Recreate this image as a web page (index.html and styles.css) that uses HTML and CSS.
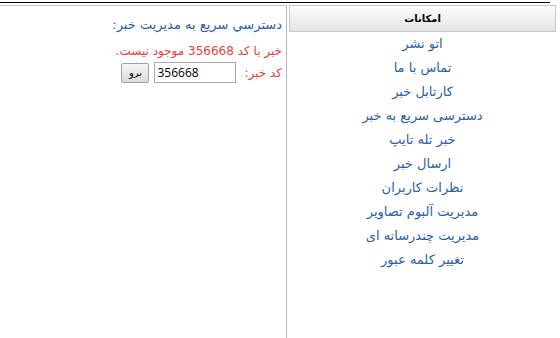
FILE: index.html
```html
<!DOCTYPE html>
<html dir="rtl">
<head>
  <meta charset="utf-8">
  <title>مديريت خبر</title>
  <link rel="stylesheet" href="styles.css">
</head>
<body>

  <div class="top-line"></div>

  <div class="page">
    <!-- menu on the right -->
    <div class="sidebar">
      <div class="sidebar-title">امکانات</div>
      <ul class="menu">
        <li><a href="#">اتو نشر</a></li>
        <li><a href="#">تماس با ما</a></li>
        <li><a href="#">کارتابل خبر</a></li>
        <li><a href="#">دسترسی سریع به خبر</a></li>
        <li><a href="#">خبر تله تایپ</a></li>
        <li><a href="#">ارسال خبر</a></li>
        <li><a href="#">نظرات کاربران</a></li>
        <li><a href="#">مدیریت آلبوم تصاویر</a></li>
        <li><a href="#">مدیریت چندرسانه ای</a></li>
        <li><a href="#">تغییر کلمه عبور</a></li>
      </ul>
    </div>

    <!-- main content -->
    <div class="content">
      <p class="quick-title">دسترسي سريع به مديريت خبر:</p>
      <p class="error">خبر با کد 356668 موجود نيست.</p>
      <form class="news-form">
        <label for="news-code">کد خبر:</label>
        <input type="text" id="news-code" value="356668">
        <button type="submit">برو</button>
      </form>
    </div>
  </div>

</body>
</html>
```

FILE: styles.css
```css
body {
  margin: 0;
  font-family: "DejaVu Sans", sans-serif;
  font-size: 12px;
  background-color: #fff;
}

.top-line {
  width: 550px;
  height: 1px;
  margin: 2px auto 0 0;
  background-color: #000;
}

.page {
  display: flex;
  width: 556px;
  margin: 2px auto 0 0;
  gap: 2px;
}

/* Sidebar */
.sidebar {
  width: 267px;
}

.sidebar-title {
  height: 25px;
  line-height: 25px;
  border: 1px solid #c8c8c8;
  background: linear-gradient(#fdfdfd, #e4e4e4);
  text-align: center;
  font-weight: bold;
  font-size: 10px;
  color: #000;
}

.menu {
  list-style: none;
  margin: 0;
  padding: 0;
}

.menu li {
  height: 24px;
  line-height: 24px;
  text-align: center;
  font-size: 13px;
}

.menu a {
  color: #2d5ea6;
  text-decoration: none;
}

/* Content */
.content {
  width: 287px;
  height: 333px;
  box-sizing: border-box;
  border-top: 1px solid #c8c8c8;
  border-right: 1px solid #b8b8b8;
  padding: 7px 4px 0 0;
}

.quick-title {
  margin: 0;
  height: 24px;
  line-height: 24px;
  font-size: 13px;
  letter-spacing: 0.8px;
  color: #2d5ea6;
}

.error {
  margin: 0;
  padding-top: 3px;
  height: 22px;
  line-height: 22px;
  color: #e8413a;
}

.news-form {
  display: flex;
  align-items: center;
}

.news-form label {
  color: #e8413a;
  margin-left: 8px;
}

#news-code {
  width: 76px;
  height: 17px;
  padding: 1px 2px;
  border: 1px solid #a9a9a9;
  font-family: "Open Sans", sans-serif;
  font-size: 12px;
  direction: ltr;
  text-align: left;
  margin-left: 5px;
}

.news-form button {
  width: 28px;
  height: 20px;
  padding: 0;
  border: 1px solid #a0a0a0;
  border-radius: 2px;
  background: linear-gradient(#f6f6f6, #dcdcdc);
  font-family: "DejaVu Sans", sans-serif;
  font-size: 10px;
}
```
